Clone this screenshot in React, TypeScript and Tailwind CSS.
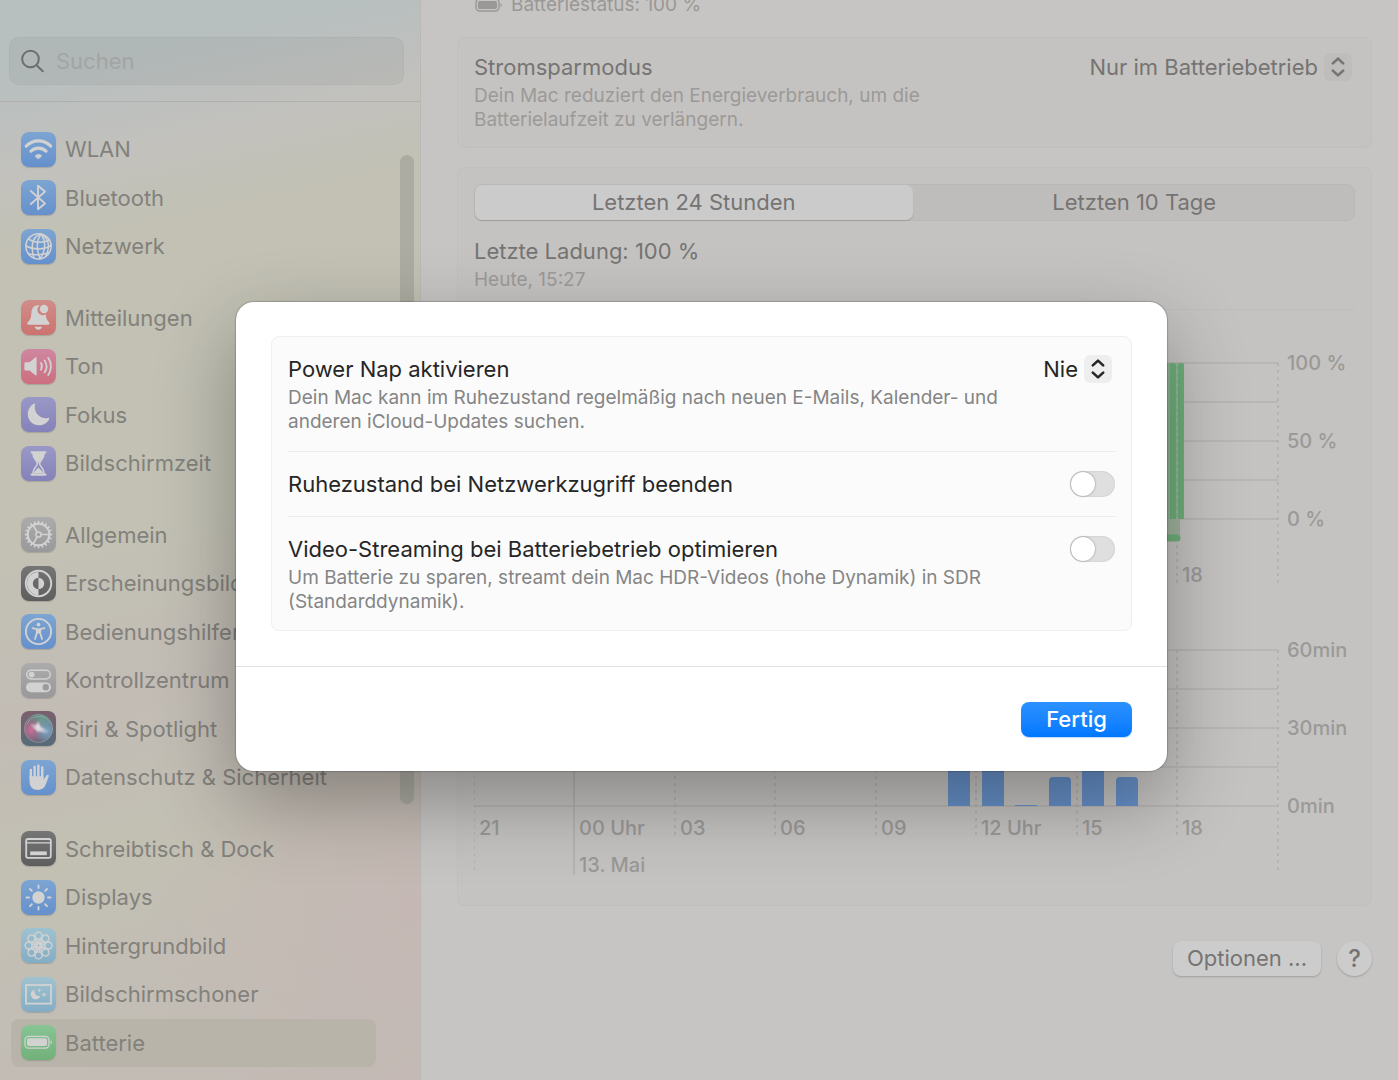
import React from "react";

type IconName =
  | "wifi"
  | "bluetooth"
  | "globe"
  | "bell"
  | "speaker"
  | "moon"
  | "hourglass"
  | "gear"
  | "contrast"
  | "accessibility"
  | "switches"
  | "siri"
  | "hand"
  | "dock"
  | "sun"
  | "flower"
  | "screensaver"
  | "battery";

const blue = "from-[#7da5d2] to-[#6590cc]";
const purple = "from-[#9a98c6] to-[#8582ba]";
const gray = "from-[#ababac] to-[#99999b]";
const black = "from-[#757575] to-[#5e5e5e]";
const teal = "from-[#9fc2cf] to-[#83adc5]";

const items: { label: string; icon: IconName; tile: string; first?: boolean; active?: boolean }[] = [
  { label: "WLAN", icon: "wifi", tile: blue },
  { label: "Bluetooth", icon: "bluetooth", tile: blue },
  { label: "Netzwerk", icon: "globe", tile: blue },
  { label: "Mitteilungen", icon: "bell", tile: "from-[#d08d89] to-[#cc7370]", first: true },
  { label: "Ton", icon: "speaker", tile: "from-[#ce87a0] to-[#cc6e80]" },
  { label: "Fokus", icon: "moon", tile: purple },
  { label: "Bildschirmzeit", icon: "hourglass", tile: purple },
  { label: "Allgemein", icon: "gear", tile: gray, first: true },
  { label: "Erscheinungsbild", icon: "contrast", tile: black },
  { label: "Bedienungshilfen", icon: "accessibility", tile: blue },
  { label: "Kontrollzentrum", icon: "switches", tile: gray },
  { label: "Siri & Spotlight", icon: "siri", tile: "from-[#7b5f6d] to-[#566b78]" },
  { label: "Datenschutz & Sicherheit", icon: "hand", tile: blue },
  { label: "Schreibtisch & Dock", icon: "dock", tile: black, first: true },
  { label: "Displays", icon: "sun", tile: blue },
  { label: "Hintergrundbild", icon: "flower", tile: teal },
  { label: "Bildschirmschoner", icon: "screensaver", tile: teal },
  { label: "Batterie", icon: "battery", tile: "from-[#88c495] to-[#72b17a]", active: true },
];

const eighths = [0, 45, 90, 135, 180, 225, 270, 315];
const teeth = Array.from({ length: 20 }, (_, i) => i * 18);

const glyphs: Record<IconName, React.ReactNode> = {
  wifi: (
    <>
      <path d="M5.2 14.1A17 17 0 0 1 29.8 14.1" strokeWidth="3.1" />
      <path d="M9.9 19.2A11 11 0 0 1 25.1 19.2" strokeWidth="3.1" />
      <path d="M14.4 23.9A4.4 4.4 0 0 1 20.6 23.9L17.5 26.6Z" fill="currentColor" strokeWidth="1" />
    </>
  ),
  bluetooth: <path d="M9.8 11L24 23.4L17 29.2V5.8L24 11.6L9.8 24" strokeWidth="1.9" />,
  globe: (
    <g strokeWidth="1.5">
      <circle cx="17.5" cy="17.3" r="12.6" />
      <path d="M20 5C12 7 9 16 13 29" />
      <path d="M20 5C15 12 16 22 19 29.6" />
      <path d="M20 5C25 12 25 22 19 29.6" />
      <path d="M20 5C29 10 29 20 24.5 27.5" />
      <path d="M7.5 9.8C13 14 22 14.5 28.5 11" />
      <path d="M5 17C12 21 23 21 30 16.5" />
      <path d="M7.5 24.6C13 26.6 22 26 28 23.5" />
    </g>
  ),
  bell: (
    <g fill="currentColor" stroke="none">
      <path d="M17.3 5.3C12.6 5.3 10.6 8.8 10.4 13.2C10.2 18.6 8.8 20 6.8 22.3C5.8 23.6 6.2 24.8 7.8 24.8H27C28.6 24.8 29 23.6 28 22.3C26.4 20.4 25 18.6 24.6 14.2A5.2 5.2 0 0 1 18.6 5.4Z" />
      <path d="M13.6 26.8H21C20.4 28.8 19 29.8 17.3 29.8C15.6 29.8 14.2 28.8 13.6 26.8Z" />
      <circle cx="23" cy="9" r="4.2" />
    </g>
  ),
  speaker: (
    <>
      <path
        d="M3.4 14.6C3.4 13.7 4 13.2 4.8 13.2H8.6L14.4 8.3C15 7.8 15.6 8.1 15.6 8.9V25.7C15.6 26.5 15 26.8 14.4 26.3L8.6 21.6H4.8C4 21.6 3.4 21 3.4 20.2Z"
        fill="currentColor"
        stroke="none"
      />
      <path d="M20 14C21.2 16.2 21.2 18.4 20 20.8M23.6 11.4C26 15 26 19.8 23.6 23.4M27.2 8.8C30.8 14 30.8 20.8 27.2 26" strokeWidth="1.8" />
    </>
  ),
  moon: (
    <path
      d="M14.2 6.6C11.8 14.5 18.4 23 27 20.9C28 20.7 28.6 21.4 28 22.4C26 26 22.2 28.2 18 28.2C11.8 28.2 6.8 23.4 6.8 17.2C6.8 12.8 9.2 8.8 12.9 6.8C13.8 6.3 14.4 6 14.2 6.6Z"
      fill="currentColor"
      stroke="none"
    />
  ),
  hourglass: (
    <>
      <path d="M10.6 6.4H24.4M10.6 28.6H24.4" strokeWidth="2.2" />
      <path d="M11.8 7C11.8 13 16.4 14.6 16.4 17.5C16.4 20.4 11.8 22 11.8 28M23.2 7C23.2 13 18.6 14.6 18.6 17.5C18.6 20.4 23.2 22 23.2 28" strokeWidth="1.5" />
      <path
        d="M12 6.5H23L22.6 11C21.8 13.6 18.6 15.2 17.5 17C16.4 15.2 13.2 13.6 12.4 11ZM17.5 21.5C19 23.5 21.5 24.5 22.5 27.5H12.5C13.5 24.5 16 23.5 17.5 21.5Z"
        fill="currentColor"
        stroke="none"
      />
    </>
  ),
  gear: (
    <>
      <circle cx="17.5" cy="17.5" r="10.8" strokeWidth="2" />
      <circle cx="17.5" cy="17.5" r="2.6" strokeWidth="1.5" />
      <path d="M20.2 17.5H28.2M16.1 15.1L12.2 8.2M16.1 19.9L12.2 26.8" strokeWidth="1.7" />
      {teeth.map((deg) => (
        <path key={deg} d="M17.5 6V4.6" strokeWidth="1.8" transform={`rotate(${deg} 17.5 17.5)`} />
      ))}
    </>
  ),
  contrast: (
    <>
      <circle cx="17.5" cy="17.5" r="12.7" strokeWidth="1.9" />
      <path d="M17.5 6A11.5 11.5 0 0 0 17.5 29V23.2A5.7 5.7 0 0 1 17.5 11.8Z" fill="currentColor" stroke="none" />
      <path d="M17.5 11.8A5.7 5.7 0 0 1 17.5 23.2Z" fill="currentColor" stroke="none" />
    </>
  ),
  accessibility: (
    <>
      <circle cx="17.5" cy="17.5" r="12.6" strokeWidth="1.9" />
      <circle cx="17.5" cy="10.6" r="1.9" fill="currentColor" stroke="none" />
      <path d="M11.6 14.2L15.8 15.2V19L14 25M23.4 14.2L19.2 15.2V19L21 25" strokeWidth="1.8" />
      <path d="M15.2 14.6H19.8V20L17.5 19.6L15.2 20Z" fill="currentColor" stroke="none" />
    </>
  ),
  switches: (
    <>
      <rect x="5.7" y="7.3" width="23.6" height="8.6" rx="4.3" strokeWidth="1.5" />
      <circle cx="10.6" cy="11.6" r="2.9" fill="currentColor" stroke="none" />
      <rect x="5" y="19.4" width="25" height="9.8" rx="4.9" fill="currentColor" stroke="none" />
      <circle cx="24.8" cy="24.3" r="3.2" fill="#9b9b9d" stroke="none" />
    </>
  ),
  siri: (
    <>
      <defs>
        <radialGradient id="siri-pink" cx="0.25" cy="0.55" r="0.45">
          <stop offset="0" stopColor="#cc6f96" />
          <stop offset="1" stopColor="#c66d92" stopOpacity="0" />
        </radialGradient>
        <radialGradient id="siri-green" cx="0.6" cy="0.2" r="0.5">
          <stop offset="0" stopColor="#6d9d90" />
          <stop offset="1" stopColor="#6d9d90" stopOpacity="0" />
        </radialGradient>
        <radialGradient id="siri-blue" cx="0.78" cy="0.6" r="0.45">
          <stop offset="0" stopColor="#7ba9c9" />
          <stop offset="1" stopColor="#7ba9c9" stopOpacity="0" />
        </radialGradient>
        <radialGradient id="siri-glow">
          <stop offset="0" stopColor="#e6e4e6" />
          <stop offset="0.4" stopColor="#dcd5da" stopOpacity="0.8" />
          <stop offset="1" stopColor="#d6c9d2" stopOpacity="0" />
        </radialGradient>
      </defs>
      <g stroke="none">
        <circle cx="17.5" cy="17.5" r="14.5" fill="#6a6577" />
        <circle cx="17.5" cy="17.5" r="14.5" fill="url(#siri-green)" />
        <circle cx="17.5" cy="17.5" r="14.5" fill="url(#siri-pink)" />
        <circle cx="17.5" cy="17.5" r="14.5" fill="url(#siri-blue)" />
        <ellipse cx="18" cy="17.5" rx="10" ry="4" fill="url(#siri-glow)" transform="rotate(25 18 17.5)" />
        <ellipse cx="17" cy="16" rx="3.4" ry="6.5" fill="url(#siri-glow)" />
      </g>
      <circle cx="17.5" cy="17.5" r="14" stroke="#8fa9a1" strokeWidth="0.6" />
      <path d="M6 13C10 3 25 3 29 12" stroke="#88b5a2" strokeWidth="0.8" />
    </>
  ),
  hand: (
    <>
      <path d="M9.9 10V19M13.6 7V18M17.4 5.8V18M21.2 7.4V19" strokeWidth="2.5" />
      <path
        d="M8.6 16H22.4V19.5C23.6 18.4 24.6 16.6 25.4 15.4C26.2 14.2 28.4 14.7 27.7 16.5L24.7 24.6C23.3 28.3 20.8 30 17.2 30C11.6 30 8.6 26.6 8.6 21.5Z"
        fill="currentColor"
        stroke="none"
      />
      <path d="M11.7 8V16M15.5 7V16M19.3 7V16" stroke="#6f9ad0" strokeWidth="0.7" />
    </>
  ),
  dock: (
    <>
      <rect x="5.2" y="8" width="24.6" height="18.8" rx="1.8" strokeWidth="1.8" />
      <path d="M5.2 11.9H29.8" strokeWidth="1.3" />
      <path d="M9.2 22.3H25.8" strokeWidth="3.8" strokeLinecap="butt" />
    </>
  ),
  sun: (
    <>
      <circle cx="17.5" cy="17.5" r="6.2" fill="currentColor" stroke="none" />
      {eighths.map((deg) => (
        <path key={deg} d="M17.5 8V5.4" strokeWidth="1.9" transform={`rotate(${deg} 17.5 17.5)`} />
      ))}
    </>
  ),
  flower: (
    <>
      {eighths.map((deg) => (
        <g key={deg} transform={`rotate(${deg} 17.5 17.5)`} strokeWidth="1.4">
          <circle cx="17.5" cy="7.6" r="3.5" />
          <path d="M15.6 10.6L17.5 15.8L19.4 10.6" />
        </g>
      ))}
      <circle cx="17.5" cy="17.5" r="2" strokeWidth="1.2" />
    </>
  ),
  screensaver: (
    <>
      <rect x="5" y="8" width="25" height="18.6" strokeWidth="1.8" strokeLinejoin="miter" />
      <path
        d="M13.6 12.4C12.6 16.4 15.6 19.8 19.5 19C18.6 21.2 16.8 22.3 14.7 22.3C11.9 22.3 9.8 20.1 9.8 17.3C9.8 15 11.3 13 13.6 12.4Z"
        fill="currentColor"
        stroke="none"
      />
      <path
        d="M18.4 11L19 12.7L20.7 13.3L19 13.9L18.4 15.6L17.8 13.9L16.1 13.3L17.8 12.7ZM23 15L23.7 17L25.7 17.7L23.7 18.4L23 20.4L22.3 18.4L20.3 17.7L22.3 17Z"
        fill="currentColor"
        stroke="none"
      />
    </>
  ),
  battery: (
    <>
      <rect x="4" y="11.3" width="24" height="11.8" rx="3.6" strokeWidth="1.3" />
      <rect x="6" y="13.3" width="20" height="7.8" rx="1.8" fill="currentColor" stroke="none" />
      <path d="M29.6 15.2C31.4 16 31.4 18.4 29.6 19.2Z" fill="currentColor" stroke="none" />
    </>
  ),
};

const TileIcon = ({ name, tile }: { name: IconName; tile: string }) => (
  <span className={`size-[35px] shrink-0 rounded-lg bg-linear-to-b text-[#d2d2d2] shadow-[0_1px_1px_rgba(0,0,0,0.15)] ${tile}`}>
    <svg viewBox="0 0 35 35" className="size-full" fill="none" stroke="currentColor" strokeLinecap="round" strokeLinejoin="round" aria-hidden="true">
      {glyphs[name]}
    </svg>
  </span>
);

const UpDown = () => (
  <svg viewBox="0 0 28 28" className="size-7" fill="none" stroke="currentColor" strokeWidth="2.6" strokeLinecap="round" strokeLinejoin="round" aria-hidden="true">
    <path d="M8.8 10.4L14 5.6L19.2 10.4M8.8 17.6L14 22.4L19.2 17.6" />
  </svg>
);

const Sidebar = () => (
  <aside className="w-[421px] shrink-0 overflow-hidden border-r border-[#bbb8b4] bg-[radial-gradient(circle_at_100%_84%,#c5b8b4_0%,transparent_28%),linear-gradient(168deg,#b7bfbf_0%,#b9bfbf_8%,#c2c1bd_15%,#c2c1b4_22%,#c2c1b4_48%,#c2bcb5_62%,#c2c0b3_76%,#c2bdb5_88%,#c3bab4_100%)]">
    <header className="border-b border-[#b1b0ac] pt-[37px] pr-4 pb-4 pl-[9px]">
      <label className="flex h-12 items-center gap-[11px] rounded-[10px] border border-black/3 bg-black/4 pl-[11px] text-[#6e6e6d]">
        <svg viewBox="0 0 24 24" className="size-6 shrink-0" fill="none" stroke="currentColor" strokeWidth="2" strokeLinecap="round" aria-hidden="true">
          <circle cx="9.5" cy="10" r="8.3" />
          <path d="M15.6 16.2L21.8 22.3" />
        </svg>
        <input type="search" placeholder="Suchen" aria-label="Suchen" className="min-w-0 flex-1 bg-transparent text-[22px] outline-none placeholder:text-[#a2a5a4]" />
      </label>
    </header>
    <div className="flex gap-6">
      <nav className="mt-[23px] flex h-[942px] w-[376px] shrink-0 flex-col pl-[11px]">
        {items.map((item) => (
          <a
            key={item.label}
            href="#"
            aria-current={item.active ? "page" : undefined}
            className={`flex flex-1 items-center gap-[9px] rounded-lg pl-[10px] text-[22px] leading-7 whitespace-nowrap text-[#82817c] ${
              item.first ? "mt-[23px]" : ""
            } ${item.active ? "bg-[#b9b4a9]" : ""}`}
          >
            <TileIcon name={item.icon} tile={item.tile} />
            {item.label}
          </a>
        ))}
      </nav>
      <div className="mt-[53px] h-[649px] w-[14px] rounded-full bg-[#adaca2]" />
    </div>
  </aside>
);

const CHART_COLUMNS = Array.from({ length: 9 }, (_, i) => Math.floor(i * 100.5));
const CHART_ROWS = [0, 39, 78, 117, 156];

interface ChartProps {
  label: string;
  scale: string[];
  ticks: { column: number; text: string }[];
  tickY: number;
  date?: string;
  height: number;
  children: React.ReactNode;
}

const Chart = ({ label, scale, ticks, tickY, date, height, children }: ChartProps) => (
  <svg viewBox={`0 -13 881 ${height}`} className="w-full" role="img" aria-label={label}>
    {CHART_ROWS.map((y) => (
      <path key={y} d={`M0 ${y}H804`} stroke="#b4b3b1" strokeWidth="1.5" />
    ))}
    {CHART_COLUMNS.map((x, i) => (
      <path
        key={x}
        d={`M${x} 0V${i === 1 ? 225 : i === 0 || i === 8 ? 222 : tickY + 3}`}
        stroke="#b0afad"
        strokeWidth="1.5"
        strokeDasharray={i === 1 ? undefined : "3 4"}
      />
    ))}
    {children}
    <g className="fill-[#9a9997] text-[20px] font-medium">
      {scale.map((text, i) => (
        <text key={text} x="813" y={i * 78 + 7}>
          {text}
        </text>
      ))}
      {ticks.map((tick) => (
        <text key={tick.text} x={CHART_COLUMNS[tick.column] + 5} y={tickY}>
          {tick.text}
        </text>
      ))}
      {date && (
        <text x={CHART_COLUMNS[1] + 5} y="222">
          {date}
        </text>
      )}
    </g>
  </svg>
);

const usage = [
  { x: 474, height: 60 },
  { x: 508, height: 60 },
  { x: 541, height: 1 },
  { x: 575, height: 29 },
  { x: 608, height: 60 },
  { x: 642, height: 29 },
];

const UsageBar = ({ x, height }: { x: number; height: number }) => {
  const r = height > 4 ? 4 : 0;
  return <path fill="#6690c8" d={`M${x} 156V${156 - height + r}q0 ${-r} ${r} ${-r}h${22 - 2 * r}q${r} 0 ${r} ${r}V156Z`} />;
};

const Battery = () => (
  <main className="min-w-0 flex-1 overflow-hidden bg-[#c7c5c3] pr-[26px] pl-9 text-[#757473]">
    <p className="-mt-[7px] mb-5 flex items-center gap-2 pl-[18px] text-[19px] leading-6 text-[#999896]">
      <svg viewBox="0 0 28 14" className="h-[14px] w-7" fill="none" stroke="currentColor" aria-hidden="true">
        <rect x="1" y="1" width="23" height="12" rx="3.5" strokeWidth="1.4" />
        <rect x="3" y="3" width="19" height="8" rx="1.5" fill="currentColor" stroke="none" />
        <path d="M25.5 5C27.5 6 27.5 8 25.5 9Z" fill="currentColor" stroke="none" />
      </svg>
      Batteriestatus: 100 %
    </p>

    <section className="flex justify-between rounded-lg border border-[#c1bfbd] bg-[#c5c3c1] px-4 pt-[14px] pb-[15px]">
      <div>
        <label htmlFor="power-mode" className="block text-[22px] leading-[30px]">
          Stromsparmodus
        </label>
        <p className="mt-[2px] text-[19px] leading-6 text-[#9b9a98]">
          Dein Mac reduziert den Energieverbrauch, um die
          <br />
          Batterielaufzeit zu verlängern.
        </p>
      </div>
      <div className="flex h-[30px] items-center gap-[6px] pr-[3px]">
        <select id="power-mode" className="field-sizing-content appearance-none bg-transparent text-[22px] leading-[30px]">
          <option>Nur im Batteriebetrieb</option>
        </select>
        <span className="rounded-md bg-[#bfbdbb]">
          <UpDown />
        </span>
      </div>
    </section>

    <section className="mt-[19px] rounded-lg border border-[#c1bfbd] bg-[#c5c3c1] px-4 pt-4 pb-5">
      <div className="grid grid-cols-2 rounded-lg border border-[#bab8b6] bg-[#bfbdbb] text-[22px] leading-[35px]">
        <button type="button" aria-pressed="true" className="mr-[2px] rounded-[7px] bg-[#cbcbcb] shadow-[0_1px_1px_rgba(0,0,0,0.15)]">
          Letzten 24 Stunden
        </button>
        <button type="button" aria-pressed="false">
          Letzten 10 Tage
        </button>
      </div>
      <h2 className="mt-[15px] text-[22px] leading-[30px]">Letzte Ladung: 100 %</h2>
      <p className="mt-[2px] text-[19px] leading-6 text-[#9b9a98]">Heute, 15:27</p>
      <hr className="mt-[17px] border-[#bfbdbb]" />

      <div className="mt-10">
        <Chart label="Batterieladestand" scale={["100 %", "50 %", "0 %"]} ticks={[{ column: 7, text: "18" }]} tickY={219} height={241}>
          <path d="M680 156H706V178H680Z" fill="#a0b39f" />
          <path d="M690 156V0H710V156Z" fill="#8fb495" />
          <path d="M696 156V3a3 3 0 0 1 6 0V156ZM704 156V3a3 3 0 0 1 6 0V156Z" fill="#6fb07b" />
          <path d="M680 175H703" stroke="#6fb07b" strokeWidth="7" strokeLinecap="round" />
          <path d="M703 0V170" stroke="#a3b5a4" strokeWidth="1.5" strokeDasharray="3 4" />
        </Chart>
      </div>
      <div className="mt-[46px]">
        <Chart
          label="Bildschirmnutzung"
          scale={["60min", "30min", "0min"]}
          ticks={[
            { column: 0, text: "21" },
            { column: 1, text: "00 Uhr" },
            { column: 2, text: "03" },
            { column: 3, text: "06" },
            { column: 4, text: "09" },
            { column: 5, text: "12 Uhr" },
            { column: 6, text: "15" },
            { column: 7, text: "18" },
          ]}
          tickY={185}
          date="13. Mai"
          height={248}
        >
          {usage.map((bar) => (
            <UsageBar key={bar.x} {...bar} />
          ))}
        </Chart>
      </div>
    </section>

    <div className="mt-[35px] flex justify-end gap-4 text-[22px]">
      <button type="button" className="h-[35px] rounded-lg bg-[#cdcccc] px-[14px] leading-[35px] shadow-[0_1px_2px_rgba(0,0,0,0.2)]">
        Optionen ...
      </button>
      <button type="button" aria-label="Hilfe" className="size-[35px] rounded-full bg-[#cdcccc] text-2xl leading-[35px] font-medium shadow-[0_1px_2px_rgba(0,0,0,0.2)]">
        ?
      </button>
    </div>
  </main>
);

const Toggle = ({ id }: { id: string }) => (
  <input
    id={id}
    type="checkbox"
    role="switch"
    className="h-[26px] w-[45px] shrink-0 appearance-none rounded-full bg-[#dfdfdf] p-px shadow-[inset_0_0_2px_rgba(0,0,0,0.15)] before:block before:size-6 before:rounded-full before:bg-white before:shadow-[0_0_2px_rgba(0,0,0,0.45)] checked:bg-[#0a7bff] checked:before:ml-auto"
  />
);

const OptionsDialog = () => (
  <div className="absolute inset-0 flex items-start justify-center pt-[302px] pl-[5px]">
    <div
      role="dialog"
      aria-modal="true"
      aria-label="Optionen"
      className="w-[931px] rounded-[18px] bg-white text-[#262626] shadow-[0_0_1px_1px_rgba(0,0,0,0.18),0_30px_80px_rgba(0,0,0,0.32)]"
    >
      <div className="px-[35px] pt-[34px] pb-[35px]">
        <div className="divide-y divide-[#ececec] rounded-lg border border-[#efefef] bg-[#fbfbfb] px-4">
          <div className="flex justify-between py-[17px]">
            <div>
              <label htmlFor="power-nap" className="block text-[22px] leading-[30px]">
                Power Nap aktivieren
              </label>
              <p className="mt-[2px] text-[19px] leading-6 text-[#858585]">
                Dein Mac kann im Ruhezustand regelmäßig nach neuen E-Mails, Kalender- und
                <br />
                anderen iCloud-Updates suchen.
              </p>
            </div>
            <div className="flex h-[30px] items-center gap-[6px] pr-[3px]">
              <select id="power-nap" className="field-sizing-content appearance-none bg-transparent text-[22px] leading-[30px]">
                <option>Nie</option>
              </select>
              <span className="rounded-md bg-[#eeeeee]">
                <UpDown />
              </span>
            </div>
          </div>
          <div className="flex items-center justify-between py-[17px]">
            <label htmlFor="wake" className="text-[22px] leading-[30px]">
              Ruhezustand bei Netzwerkzugriff beenden
            </label>
            <Toggle id="wake" />
          </div>
          <div className="pt-[17px] pb-4">
            <div className="flex items-center justify-between">
              <label htmlFor="video" className="text-[22px] leading-[30px]">
                Video-Streaming bei Batteriebetrieb optimieren
              </label>
              <Toggle id="video" />
            </div>
            <p className="mt-[2px] text-[19px] leading-6 text-[#858585]">
              Um Batterie zu sparen, streamt dein Mac HDR-Videos (hohe Dynamik) in SDR
              <br />
              (Standarddynamik).
            </p>
          </div>
        </div>
      </div>
      <div className="flex justify-end border-t border-[#e0e0e0] px-[35px] pt-[35px] pb-[34px]">
        <button type="button" className="h-[35px] w-[111px] rounded-lg bg-linear-to-b from-[#2b92ff] to-[#0077ff] text-[22px] leading-[35px] font-medium text-white shadow-[0_1px_1px_rgba(0,100,255,0.25)]">
          Fertig
        </button>
      </div>
    </div>
  </div>
);

const App: React.FC = () => {
  return (
    <div className="relative flex h-screen overflow-hidden font-['Inter','Liberation_Sans',sans-serif]">
      <Sidebar />
      <Battery />
      <OptionsDialog />
    </div>
  );
};

export default App;
